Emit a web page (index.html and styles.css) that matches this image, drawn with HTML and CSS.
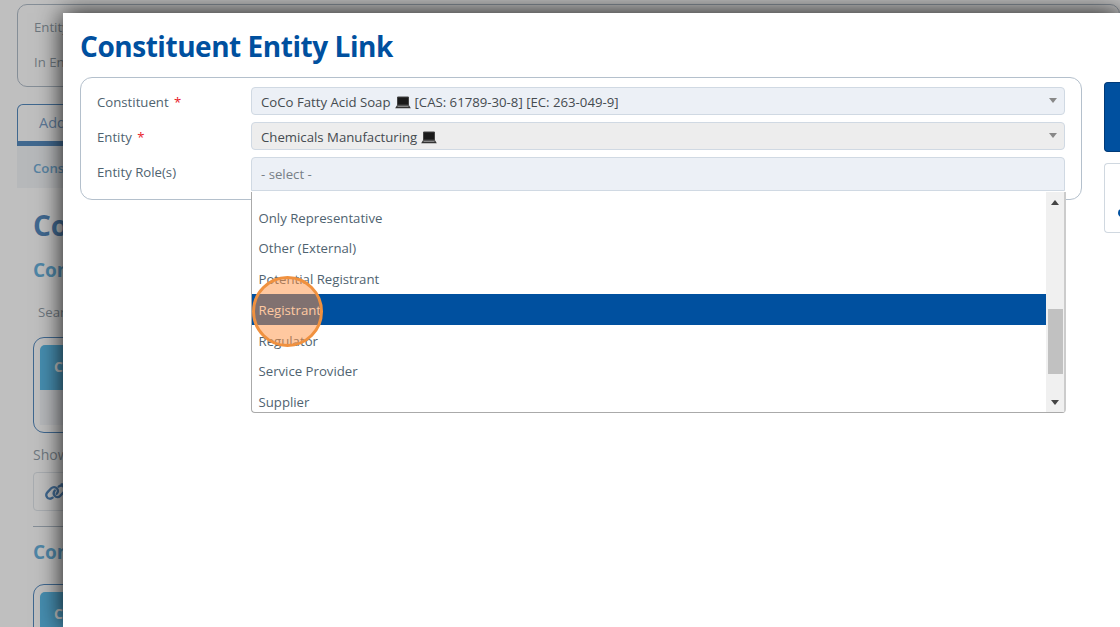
FILE: index.html
```html
<!DOCTYPE html>
<html lang="en">

<head>
    <meta charset="UTF-8" />
    <meta name="viewport" content="width=device-width, initial-scale=1" />
    <title>Constituent Entity Link</title>
    <link rel="stylesheet" href="styles.css">
</head>

<body>
    <div class="page">
        <div class="info">
            <div>Entity</div>
            <div>In Entity</div>
        </div>
        <div class="tabs">Add</div>
        <div class="subtabs">Const</div>
        <div class="content">
            <h1>Const</h1>
            <h2>Const</h2>
            <div class="search">Search</div>
            <div class="grid">
                <div class="gridhead">Const</div>
                <div class="gridrow"></div>
            </div>
            <div class="showing">Showing</div>
            <div class="linkbtn">
                <svg width="26" height="18" viewBox="0 0 26 18" fill="none" stroke="#00509f" stroke-width="2.3" stroke-linecap="round">
                    <path d="M7.600 14.600C5.900 16.300 3.300 16 2.100 14.300C.9 12.700 1.200 10.600 2.600 9.100L6.200 5.300C7.900 3.600 10.400 3.700 11.800 5.300C13.200 6.900 13.100 9.200 11.700 10.800" />
                    <path d="M13.600 3.600C15.300 2.300 17.600 2.500 18.900 4.100C20.200 5.700 20 7.900 18.600 9.300L15.200 12.900C13.500 14.600 11 14.400 9.700 12.800C8.400 11.200 8.400 9 9.800 7.400" />
                    <path d="M16.500 1.300H24" />
                </svg>
            </div>
            <hr>
            <h2>Const</h2>
            <div class="grid second">
                <div class="gridhead">Const</div>
            </div>
        </div>
    </div>
    <div class="overlay"></div>

    <div class="dialog">
        <h1 class="title">Constituent Entity Link</h1>
        <div class="dialogbody">
            <div class="form">
                <div class="row">
                    <label>Constituent <span class="req">*</span></label>
                    <div class="field">
                        <span>CoCo Fatty Acid Soap</span>
                        <svg class="laptop" width="16" height="13" viewBox="0 0 16 13">
                            <path d="M2.500 1h11v8h-11z" fill="#1a1a1a" stroke="#444" />
                            <path d="M2 9.300h12l1.800 2.900H.2z" fill="#333" />
                            <path d="M2.500 10.400h11" stroke="#aaa" stroke-width=".8" />
                        </svg>
                        <span>[CAS: 61789-30-8] [EC: 263-049-9]</span>
                        <i class="arrow"></i>
                    </div>
                </div>
                <div class="row">
                    <label>Entity <span class="req">*</span></label>
                    <div class="field disabled">
                        <span>Chemicals Manufacturing</span>
                        <svg class="laptop" width="16" height="13" viewBox="0 0 16 13">
                            <path d="M2.500 1h11v8h-11z" fill="#1a1a1a" stroke="#444" />
                            <path d="M2 9.300h12l1.800 2.900H.2z" fill="#333" />
                            <path d="M2.500 10.400h11" stroke="#aaa" stroke-width=".8" />
                        </svg>
                        <i class="arrow"></i>
                    </div>
                </div>
                <div class="row">
                    <label>Entity Role(s)</label>
                    <div class="field roles">
                        <span>- select -</span>
                        <div class="dropdown">
                            <ul>
                                <li>Only Representative</li>
                                <li>Other (External)</li>
                                <li>Potential Registrant</li>
                                <li class="active">Registrant</li>
                                <li>Regulator</li>
                                <li>Service Provider</li>
                                <li>Supplier</li>
                            </ul>
                            <div class="scrollbar">
                                <i class="up"></i>
                                <div class="thumb"></div>
                                <i class="down"></i>
                            </div>
                            <div class="click"></div>
                        </div>
                    </div>
                </div>
            </div>
            <div class="actions">
                <div class="action primary"></div>
                <div class="action"><i class="dot"></i></div>
            </div>
        </div>
    </div>
</body>

</html>
```

FILE: styles.css
```css
* {
    box-sizing: border-box;
}

body {
    margin: 0;
    height: 627px;
    overflow: hidden;
    position: relative;
    font-family: "Open Sans", sans-serif;
    font-size: 13.2px;
    color: #4f6370;
    background: #fff;
}

h1,
h2 {
    margin: 0;
    font-weight: 700;
    white-space: nowrap;
}

/* page behind the dialog */
.page {
    height: 627px;
    overflow: hidden;
    padding: 4px 0 0 17px;
    color: #5c6f7d;
}

.info {
    height: 83px;
    border: 1px solid #8b9cae;
    border-radius: 10px;
    padding: 5px 0 0 16px;
    line-height: 35px;
}

.tabs {
    width: 400px;
    height: 42px;
    margin-top: 17px;
    padding-left: 21px;
    line-height: 35px;
    font-size: 14.5px;
    color: #3a72ae;
    border: 1px solid #00509f;
    border-bottom: 5px solid #00509f;
    border-radius: 6px 6px 0 0;
}

.subtabs {
    height: 42px;
    padding-left: 16px;
    line-height: 45px;
    font-weight: 600;
    color: #2f86c4;
    background: #edf0f4;
}

.content {
    padding-left: 16px;
}

.content h1 {
    margin-top: 17px;
    font-size: 28px;
    line-height: 40px;
    color: #00509f;
}

.content h2 {
    margin-top: 10px;
    font-size: 19px;
    line-height: 30px;
    color: #1c8ccd;
}

.search {
    margin: 17px 0 15px 5px;
    line-height: 20px;
}

.grid {
    height: 96px;
    padding: 7px 6px;
    border: 1px solid #00509f;
    border-radius: 11px;
}

.grid.second {
    margin-top: 17px;
}

.gridhead {
    height: 45px;
    padding-left: 14px;
    line-height: 44px;
    font-size: 14px;
    font-weight: 700;
    color: #fff;
    background: #0c9ade;
    border-radius: 5px 5px 0 0;
}

.gridrow {
    height: 35px;
    background: #edf0f6;
}

.showing {
    margin-top: 12px;
    font-size: 14px;
    line-height: 20px;
}

.linkbtn {
    width: 120px;
    height: 39px;
    margin-top: 7px;
    padding: 10px 0 0 11px;
    border: 1px solid #d0d8e0;
    border-radius: 4px;
}

.content hr {
    height: 1px;
    margin: 15px 0 0;
    border: none;
    background: #8b9cae;
}

.overlay {
    position: absolute;
    inset: 0;
    background: rgba(128, 128, 128, 0.5);
}

/* dialog */
.dialog {
    position: absolute;
    left: 63px;
    top: 13px;
    right: 0;
    bottom: 0;
    padding: 13px 0 0 17px;
    background: #fff;
    box-shadow: 0 0 24px rgba(0, 0, 0, 0.9);
}

.title {
    font-size: 28px;
    line-height: 40px;
    letter-spacing: -0.46px;
    color: #00509f;
}

.dialogbody {
    display: flex;
    align-items: flex-start;
    gap: 22px;
    margin-top: 11px;
}

.form {
    display: flex;
    flex-direction: column;
    flex: none;
    gap: 7px;
    width: 1002px;
    height: 123px;
    padding: 9px 16px;
    border: 1px solid #b4c0cc;
    border-radius: 12px;
}

.row {
    display: flex;
    align-items: flex-start;
}

.row label {
    width: 154px;
    line-height: 30px;
    height: 28px;
}

.req {
    margin-left: 2px;
    color: #e8202a;
}

.field {
    position: relative;
    display: flex;
    align-items: center;
    flex: 1;
    height: 28px;
    padding: 1px 7px 0 9px;
    white-space: nowrap;
    color: #454b50;
    background: #ecf0f6;
    border: 1px solid #d0d9e3;
    border-radius: 4px;
}

.field.disabled {
    background: #ededed;
}

.field.roles {
    height: 34px;
    padding-top: 0;
    padding-bottom: 1px;
    color: #777f86;
    border-radius: 4px 4px 0 0;
}

.laptop {
    margin: 1px 4px 0;
}

.arrow {
    margin-left: auto;
    margin-bottom: 3px;
    border: 4.5px solid transparent;
    border-top: 5px solid #888;
    border-bottom: none;
}

.dropdown {
    position: absolute;
    left: -1px;
    top: 34px;
    display: flex;
    width: 815px;
    height: 221px;
    background: #fff;
    border: 1px solid #aaa;
    border-right: 2px solid #ccc;
    border-top: none;
    border-radius: 0 0 4px 4px;
}

.dropdown ul {
    flex: 1;
    margin: 0;
    padding: 9.500px 0 0;
    list-style: none;
    overflow: hidden;
}

.dropdown li {
    height: 30.8px;
    padding-left: 6.5px;
    line-height: 32px;
    color: #4f6370;
}

.dropdown li.active {
    color: #fff;
    background: #00509f;
}

.scrollbar {
    display: flex;
    flex-direction: column;
    align-items: center;
    width: 18px;
    padding: 8px 0 7px;
    background: #f0f0f0;
}

.up,
.down {
    border: 4px solid transparent;
}

.up {
    border-top: none;
    border-bottom: 5px solid #444;
}

.down {
    margin-top: auto;
    border-bottom: none;
    border-top: 5px solid #444;
}

.thumb {
    width: 15px;
    height: 65px;
    margin-top: 104px;
    background: #c1c1c1;
}

.click {
    position: absolute;
    left: 0;
    top: 84px;
    width: 71px;
    height: 71px;
    border: 3px solid #f0913f;
    border-radius: 50%;
    background: rgba(255, 145, 65, 0.5);
}

.actions {
    display: flex;
    flex-direction: column;
    flex: 1;
    gap: 11px;
    padding-top: 5px;
    overflow: hidden;
}

.action {
    display: flex;
    align-items: center;
    height: 70px;
    padding: 29px 0 0 13px;
    border: 1px solid #d0d8e0;
    border-right: none;
    border-radius: 4px 0 0 4px;
}

.action.primary {
    background: #00509f;
    border-color: #003a78;
}

.dot {
    flex: none;
    width: 7px;
    height: 8px;
    border-radius: 50%;
    background: #00509f;
}
```
